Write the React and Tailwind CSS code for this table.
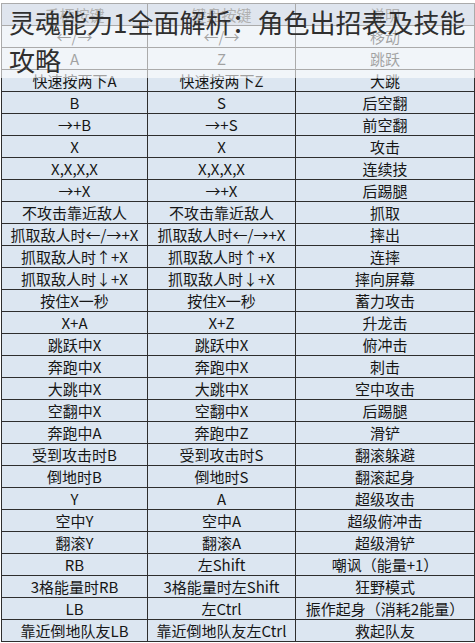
const ROWS = [
  ['←/→', '←/→', '移动'],
  ['A', 'Z', '跳跃'],
  ['快速按两下A', '快速按两下Z', '大跳'],
  ['B', 'S', '后空翻'],
  ['→+B', '→+S', '前空翻'],
  ['X', 'X', '攻击'],
  ['X,X,X,X', 'X,X,X,X', '连续技'],
  ['→+X', '→+X', '后踢腿'],
  ['不攻击靠近敌人', '不攻击靠近敌人', '抓取'],
  ['抓取敌人时←/→+X', '抓取敌人时←/→+X', '摔出'],
  ['抓取敌人时↑+X', '抓取敌人时↑+X', '连摔'],
  ['抓取敌人时↓+X', '抓取敌人时↓+X', '摔向屏幕'],
  ['按住X一秒', '按住X一秒', '蓄力攻击'],
  ['X+A', 'X+Z', '升龙击'],
  ['跳跃中X', '跳跃中X', '俯冲击'],
  ['奔跑中X', '奔跑中X', '刺击'],
  ['大跳中X', '大跳中X', '空中攻击'],
  ['空翻中X', '空翻中X', '后踢腿'],
  ['奔跑中A', '奔跑中Z', '滑铲'],
  ['受到攻击时B', '受到攻击时S', '翻滚躲避'],
  ['倒地时B', '倒地时S', '翻滚起身'],
  ['Y', 'A', '超级攻击'],
  ['空中Y', '空中A', '超级俯冲击'],
  ['翻滚Y', '翻滚A', '超级滑铲'],
  ['RB', '左Shift', '嘲讽（能量+1）'],
  ['3格能量时RB', '3格能量时左Shift', '狂野模式'],
  ['LB', '左Ctrl', '振作起身（消耗2能量）'],
  ['靠近倒地队友LB', '靠近倒地队友左Ctrl', '救起队友'],
]

export default function App() {
  return (
    <div
      className="relative w-[475px] h-[643px] overflow-hidden bg-white"
      style={{ fontFamily: '"Noto Sans CJK SC", "Liberation Sans", sans-serif' }}
    >
      <table className="ml-[1px] mt-[3px] w-[473px] border-collapse table-fixed text-[15px] text-[#161616]">
        <colgroup>
          <col className="w-[146px]" />
          <col className="w-[148px]" />
          <col className="w-[179px]" />
        </colgroup>
        <thead>
          <tr className="h-[22px] bg-[#aebfd4]">
            {['手柄按键', '键盘按键', '说明'].map((h) => (
              <th key={h} className="border border-[#2e2e2e] p-0 leading-none font-normal text-[#3a3a3a]">
                {h}
              </th>
            ))}
          </tr>
        </thead>
        <tbody>
          {ROWS.map((r, i) => (
            <tr key={i} className="h-[22px] bg-[#dce6f1]">
              {r.map((c, j) => (
                <td key={j} className="border border-[#2e2e2e] p-0 leading-none text-center whitespace-nowrap">
                  {c}
                </td>
              ))}
            </tr>
          ))}
        </tbody>
      </table>

      <div className="absolute top-0 left-0 right-0 h-[78px] bg-white/60 px-[9px] pt-[3px] text-[26px] leading-[38px] text-[#2f2f2f]">
        灵魂能力1全面解析：角色出招表及技能攻略
      </div>
    </div>
  )
}
